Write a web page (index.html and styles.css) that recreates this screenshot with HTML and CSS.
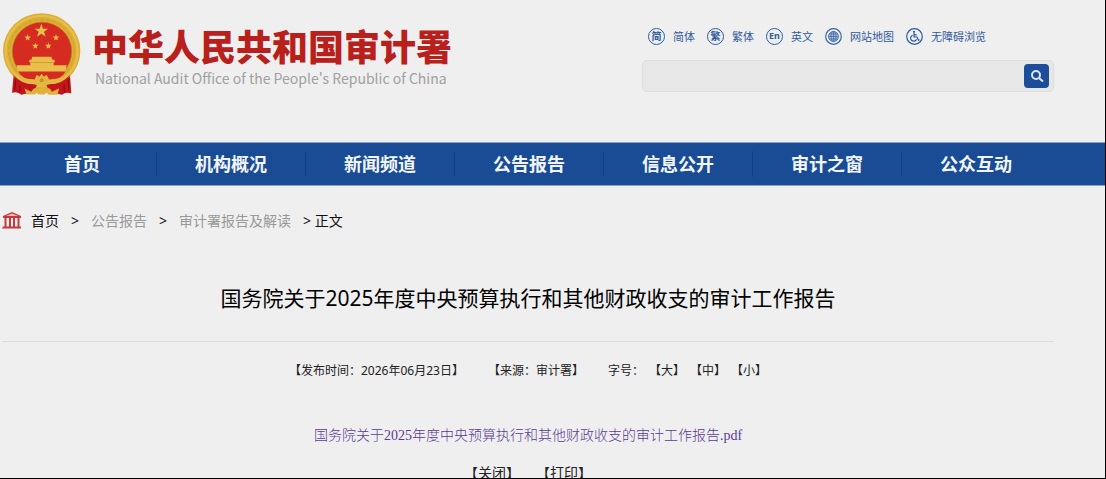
FILE: index.html
```html
<!DOCTYPE html>
<html lang="zh-CN">
<head>
    <meta charset="UTF-8">
    <meta name="viewport" content="width=device-width, initial-scale=1.0">
    <title>国务院关于2025年度中央预算执行和其他财政收支的审计工作报告</title>
    <link rel="stylesheet" href="styles.css">
</head>
<body>
    <header class="header">
        <div class="logo">
            <svg class="emblem" viewBox="9 21 234 249" aria-hidden="true">
                <path d="M42 196 L36 262 Q52 256 64 268 L90 262 L160 262 L186 268 Q198 258 214 264 L209 196 Z" fill="#c3161c"/>
                <path d="M48 212 L44 254 M62 226 L58 260 M204 212 L207 254 M190 226 L194 260" stroke="#8f0d12" stroke-width="4" fill="none"/>
                <ellipse cx="125" cy="136" rx="116" ry="113" fill="#dcae35"/>
                <ellipse cx="125" cy="136" rx="108" ry="105" fill="none" stroke="#e6bf4a" stroke-width="7"/>
                <ellipse cx="125" cy="137" rx="98" ry="95" fill="none" stroke="#d3a334" stroke-width="5" stroke-dasharray="12 6"/>
                <ellipse cx="126" cy="138" rx="89" ry="88" fill="#d52b20" stroke="#b97a1c" stroke-width="2"/>
                <path d="M40 208 Q66 240 112 236 L100 262 Q62 258 40 208 Z" fill="#c3161c"/>
                <path d="M210 208 Q184 240 138 236 L150 262 Q188 258 210 208 Z" fill="#c3161c"/>
                <g fill="#e8bf4c">
                    <path d="M124 55 l5 15 h15 l-12 9 5 15 -13 -9 -13 9 5 -15 -12 -9 h15 z"/>
                    <path d="M83 85 l2 8 h8 l-6 5 2 7 -6 -4 -6 4 2 -7 -6 -5 h8 z"/>
                    <path d="M168 85 l2 8 h8 l-6 5 2 7 -6 -4 -6 4 2 -7 -6 -5 h8 z"/>
                    <path d="M106 110 l2 8 h8 l-6 5 2 7 -6 -4 -6 4 2 -7 -6 -5 h8 z"/>
                    <path d="M145 110 l2 8 h8 l-6 5 2 7 -6 -4 -6 4 2 -7 -6 -5 h8 z"/>
                    <path d="M97 154 H154 L157 163 H163 L165 170 H161 V179 H200 L196 200 H54 L50 179 H91 V170 H87 L89 163 H94 Z"/>
                </g>
                <path d="M93 171 H160" stroke="#d08a24" stroke-width="2"/>
                <path d="M54 198 H197 Q190 211 176 219 Q126 226 76 219 Q62 211 54 198 Z" fill="#d52b20"/>
                <path d="M50 204 Q74 224 104 222 L110 208 L118 214 L125 205 L132 214 L140 208 L147 222 Q176 224 202 204 Q184 236 146 236 Q126 246 104 236 Q66 236 50 204 Z" fill="#e3b842"/>
                <circle cx="125" cy="224" r="6" fill="#c99125"/>
                <path d="M73 249 L94 259 Q101 244 112 248 L125 242 L138 248 Q150 244 156 259 L178 248 L172 268 H146 Q140 258 134 267 H116 Q110 258 104 267 H80 Z" fill="#e0b23c"/>
            </svg>
            <div class="logo-text">
                <div class="logo-cn">中华人民共和国审计署</div>
                <div class="logo-en">National Audit Office of the People's Republic of China</div>
            </div>
        </div>
        <div class="tools">
            <div class="links">
                <a href="#"><span class="ring">简</span>简体</a>
                <a href="#"><span class="ring">繁</span>繁体</a>
                <a href="#"><span class="ring en">En</span>英文</a>
                <a href="#">
                    <svg class="icon" viewBox="0 0 17 17" fill="none" stroke="#3a66a7" aria-hidden="true">
                        <circle cx="8.5" cy="8.5" r="7.8" stroke-width="1.2"/>
                        <circle cx="8.5" cy="8.5" r="5" fill="#a9bddb" stroke-width=".8"/>
                        <path d="M3.5 8.5h10M8.5 3.5v10M4.3 6h8.4M4.3 11h8.4" stroke-width=".7"/>
                        <ellipse cx="8.5" cy="8.5" rx="2.5" ry="5" stroke-width=".7"/>
                    </svg>网站地图</a>
                <a href="#">
                    <svg class="icon" viewBox="0 0 17 17" fill="none" stroke="#2b5ba4" aria-hidden="true">
                        <circle cx="8.5" cy="8.5" r="7.8" stroke-width="1.2"/>
                        <circle cx="8" cy="3.8" r="1.1" fill="#2b5ba4" stroke="none"/>
                        <path d="M8 5v4h3l1.5 3.2 1-.4M8 6.8h2.8M6.6 7.2a3.1 3.1 0 1 0 4 4" stroke-width="1.2"/>
                    </svg>无障碍浏览</a>
            </div>
            <form class="search">
                <input type="text" aria-label="搜索">
                <button type="button" aria-label="搜索">
                    <svg viewBox="0 0 14 14" fill="none" stroke="#dce6f5" stroke-width="2" aria-hidden="true">
                        <circle cx="6" cy="6" r="4"/>
                        <path d="M9 9l4 3.6"/>
                    </svg>
                </button>
            </form>
        </div>
    </header>

    <nav class="nav">
        <a href="#">首页</a>
        <a href="#">机构概况</a>
        <a href="#">新闻频道</a>
        <a href="#">公告报告</a>
        <a href="#">信息公开</a>
        <a href="#">审计之窗</a>
        <a href="#">公众互动</a>
    </nav>

    <main class="content">
        <div class="crumbs">
            <svg class="home" viewBox="0 0 20 17" aria-hidden="true">
                <path d="M10 0 L19 4 V6 H1 V4 Z M1 14.5 H19 V16.5 H0 Z" fill="#c8383b"/>
                <path d="M4 3.9 L10 1.5 L16 3.9 Z" fill="#efb9b8"/>
                <path d="M3.5 6 V15 M8 6 V15 M12 6 V15 M16.5 6 V15" stroke="#c8383b" stroke-width="2"/>
            </svg>
            <a href="#" class="dark">首页</a>
            <span>&gt;</span>
            <a href="#">公告报告</a>
            <span>&gt;</span>
            <a href="#">审计署报告及解读</a>
            <span>&gt; 正文</span>
        </div>

        <h1>国务院关于2025年度中央预算执行和其他财政收支的审计工作报告</h1>

        <div class="meta">
            <span>【发布时间：2026年06月23日】</span>
            <span>【来源：审计署】</span>
            <div class="sizes">字号：<button>【大】</button><button>【中】</button><button>【小】</button></div>
        </div>

        <a class="pdf" href="#">国务院关于2025年度中央预算执行和其他财政收支的审计工作报告.pdf</a>

        <div class="actions">
            <button>【关闭】</button>
            <button>【打印】</button>
        </div>
    </main>
</body>
</html>
```
FILE: styles.css
```css
* {
    box-sizing: border-box;
}
body {
    margin: 0;
    height: 100vh;
    overflow: hidden;
    background-color: #efefef;
    border-right: 1px solid #000;
    border-bottom: 1px solid #000;
    font-family: "Noto Sans", "Noto Sans CJK SC", sans-serif;
    font-size: 14px;
    color: #000;
}
a {
    text-decoration: none;
    color: inherit;
}
button {
    border: none;
    background: none;
    padding: 0;
    font: inherit;
    color: inherit;
    cursor: pointer;
}

/* header */
.header {
    display: flex;
    justify-content: space-between;
    height: 142px;
    padding: 12px 51px 0 3px;
}
.logo {
    display: flex;
    gap: 11px;
}
.emblem {
    width: 78px;
    height: 84px;
}
.logo-text {
    padding-top: 10px;
    white-space: nowrap;
}
.logo-cn {
    font-family: "Noto Sans CJK SC", sans-serif;
    font-size: 36px;
    font-weight: 900;
    line-height: 46px;
    color: #b9201c;
}
.logo-en {
    font-family: "Noto Sans CJK SC", sans-serif;
    font-size: 14px;
    line-height: 20px;
    padding-left: 3px;
    color: #a0a0a0;
}
.tools {
    width: 412px;
    padding-top: 16px;
}
.links {
    display: flex;
    gap: 12px;
    padding-left: 6px;
    font-size: 11px;
    line-height: 17px;
    color: #2f5b9d;
    white-space: nowrap;
}
.links a {
    display: flex;
    gap: 8px;
}
.icon {
    width: 17px;
    height: 17px;
}
.ring {
    width: 17px;
    height: 17px;
    border: 1px solid #2b5ba4;
    border-radius: 50%;
    font-size: 10px;
    font-weight: bold;
    line-height: 14px;
    text-align: center;
}
.ring.en {
    font-size: 9px;
}
.search {
    display: flex;
    align-items: center;
    height: 32px;
    margin-top: 15px;
    padding-right: 4px;
    background-color: #e7e7e7;
    border: 1px solid #dedede;
    border-radius: 5px;
}
.search input {
    flex: 1;
    height: 28px;
    padding: 0 10px;
    border: none;
    outline: none;
    background: none;
}
.search button {
    display: flex;
    align-items: center;
    justify-content: center;
    width: 25px;
    height: 24px;
    border-radius: 4px;
    background-color: #1b4d98;
}
.search svg {
    width: 14px;
    height: 14px;
}

/* main menu */
.nav {
    display: flex;
    align-items: center;
    height: 44px;
    padding: 0 55px 0 8px;
    background-color: #1a4c95;
    border-top: 1px solid #8ba4ca;
    border-bottom: 1px solid #8ba4ca;
}
.nav a {
    flex: 1;
    border-right: 1px solid #123f85;
    color: #f2f6fc;
    font-size: 18px;
    font-weight: bold;
    line-height: 26px;
    text-align: center;
}
.nav a:last-child {
    border-right: none;
}

/* article */
.content {
    padding: 0 51px 0 2px;
}
.crumbs {
    display: flex;
    align-items: center;
    gap: 12px;
    height: 68px;
    color: #999;
}
.crumbs span,
.crumbs .dark {
    color: #111;
}
.home {
    width: 20px;
    height: 17px;
    margin-right: -3px;
}
h1 {
    margin: 0;
    padding: 24px 0 23px;
    border-bottom: 1px solid #dedede;
    font-size: 21px;
    font-weight: normal;
    line-height: 40px;
    text-align: center;
}
.meta {
    display: flex;
    justify-content: center;
    gap: 24px;
    padding: 15px 0 39px;
    font-size: 12px;
    line-height: 28px;
    color: #222;
}
.sizes {
    display: flex;
    gap: 5px;
}
.pdf {
    display: block;
    font-family: "Liberation Serif", "Noto Sans CJK SC", serif;
    font-weight: 300;
    line-height: 24px;
    text-align: center;
    color: #5b3a94;
}
.actions {
    display: flex;
    justify-content: center;
    gap: 16px;
    padding-top: 13px;
    line-height: 24px;
    color: #222;
}
```
